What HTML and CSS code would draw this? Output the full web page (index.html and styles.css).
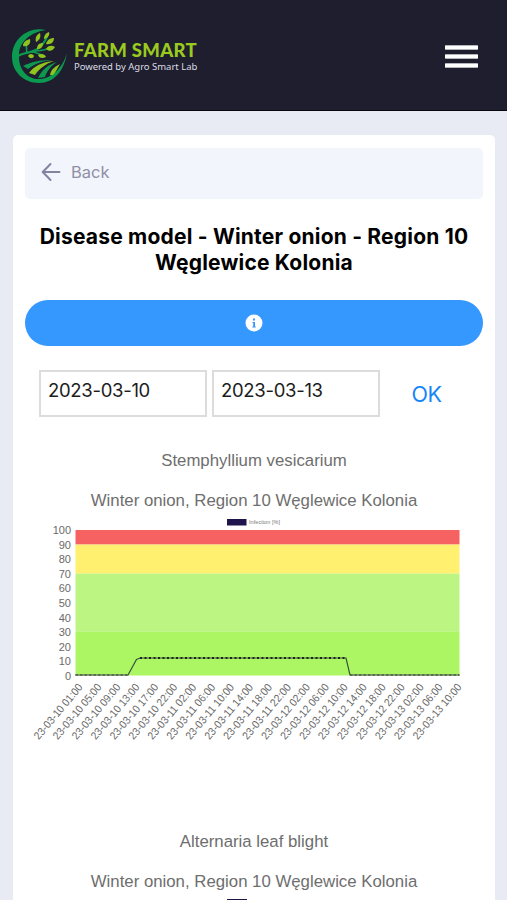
FILE: index.html
```html
<!DOCTYPE html>
<html lang="en">
<head>
  <meta charset="UTF-8">
  <meta name="viewport" content="width=device-width, initial-scale=1.0">
  <title>Farm Smart - Disease model</title>
  <link rel="stylesheet" href="styles.css">
</head>
<body>
  <header class="topbar">
    <div class="brand">
      <svg class="brand-logo" width="56" height="56" viewBox="0 0 56 56">
        <path d="M34 2C15-2 0 12 0 29c0 15 12 26 27 26 15 0 25-12 28-30-4 14-14 25-27 26C16 52 7 42 7 29 6 15 18 4 34 2z" fill="#0c9a50"/>
        <g fill="none" stroke="#0c9a50" stroke-linecap="round">
          <path d="M4 29c9-6 17-3 24-10 4-4 6-7 7-11" stroke-width="2.2"/>
          <path d="M15 25c-1-4 0-6-1-9M22 23c6 0 12-1 18-4M20 24c4 0 7 2 10 3" stroke-width="1.7"/>
        </g>
        <g fill="#8fc31f">
          <path d="M11 18c0-4 3-6 7-7 1 5-2 8-7 7z"/>
          <path d="M24 14c-1-4 0-7 4-9 1 4 0 7-4 9z"/>
          <path d="M32 11c0-4 2-6 5-7 1 3-1 6-5 7z"/>
          <path d="M34 16c1-4 4-6 8-6 0 4-3 7-8 6z"/>
          <path d="M34 21c2-4 6-4 9-2-2 4-6 5-9 2z"/>
          <path d="M25 21c0-4 2-6 6-6 0 4-2 6-6 6z"/>
          <path d="M16 28c2-3 5-2 6 0-1 3-4 3-6 0z"/>
          <path d="M26 27c3-2 7-1 8 2-4 2-7 1-8-2z"/>
        </g>
        <path d="M11 38c8-4 17-6 29-6-10 1-18 4-24 9z" fill="#0c9a50"/>
        <path d="M17 45c5-7 13-11 25-12-9 3-15 8-19 14z" fill="#8fc31f"/>
        <path d="M26 50c4-8 9-13 19-16-7 5-10 9-12 15z" fill="#0c9a50"/>
        <path d="M38 47c1-5 4-8 10-11-3 5-4 8-7 11z" fill="#8fc31f"/>
      </svg>
      <div class="brand-text">
        <div class="brand-name">FARM SMART</div>
        <div class="brand-sub">Powered by Agro Smart Lab</div>
      </div>
    </div>
    <div class="menu">
      <span></span>
      <span></span>
      <span></span>
    </div>
  </header>

  <main class="card">
    <a class="back">
      <svg width="20" height="20" viewBox="0 0 20 20" fill="none" stroke="#8483a0" stroke-width="2" stroke-linecap="round" stroke-linejoin="round">
        <path d="M18.5 10H2M9.5 2L1.7 10l7.8 8"/>
      </svg>
      <span>Back</span>
    </a>
    <h1>Disease model - Winter onion - Region 10 Węglewice Kolonia</h1>
    <button class="info">
      <svg width="18" height="18" viewBox="0 0 18 18">
        <circle cx="9" cy="9" r="8.5" fill="#fff"/>
        <path d="M8 4.5h2v2H8zM7.5 8H10v4.5h.8v1H7.3v-1h.9V9h-.7z" fill="#3598fe"/>
      </svg>
    </button>
    <div class="dates">
      <div class="date">2023-03-10</div>
      <div class="date">2023-03-13</div>
      <a class="ok">OK</a>
    </div>

    <section class="model">
      <h2>Stemphyllium vesicarium</h2>
      <h3>Winter onion, Region 10 Węglewice Kolonia</h3>
      <svg class="chart" id="chart" width="457" height="250" viewBox="25 511 457 250"></svg>
    </section>

    <section class="model">
      <h2>Alternaria leaf blight</h2>
      <h3>Winter onion, Region 10 Węglewice Kolonia</h3>
      <div class="legend-box"></div>
    </section>
  </main>

  <script src="chart.js"></script>
</body>
</html>
```
FILE: styles.css
```css
* {
  box-sizing: border-box;
}
body {
  margin: 0;
  height: 900px;
  overflow: hidden;
  background-color: #e8ebf4;
  font-family: Inter, "Liberation Sans", sans-serif;
}
.topbar {
  height: 111px;
  display: flex;
  justify-content: space-between;
  align-items: center;
  padding: 1px 29px 0 12px;
  background-color: #1f1e2e;
  border-bottom: 1px solid #08080f;
}
.brand {
  display: flex;
  align-items: center;
  gap: 6px;
}
.brand-text {
  padding-top: 1px;
}
.brand-name {
  font-family: Lato, sans-serif;
  font-weight: 900;
  font-size: 18.5px;
  line-height: 20px;
  letter-spacing: 0.3px;
  color: #9aca1e;
  white-space: nowrap;
}
.brand-sub {
  font-family: "Noto Sans", sans-serif;
  font-size: 9.5px;
  line-height: 13px;
  letter-spacing: -0.02px;
  color: #dcdce4;
  white-space: nowrap;
}
.menu {
  display: flex;
  flex-direction: column;
  gap: 4px;
  padding-top: 1px;
}
.menu span {
  width: 33px;
  height: 5px;
  border-radius: 1px;
  background-color: #fff;
  border: 1px solid #b4b4bb;
  border-width: 1px 0;
}
.card {
  margin: 24px 12px 0 13px;
  height: 800px;
  padding: 13px 12px 0;
  background-color: #fff;
  border-radius: 5px;
}
.back {
  height: 51px;
  display: flex;
  align-items: center;
  gap: 10px;
  padding: 0 16px 4px;
  border-radius: 5px;
  background-color: #f3f5fd;
  color: #8f8fa5;
  font-size: 16.5px;
}
h1 {
  margin: 25px 0 24px;
  font-size: 21px;
  line-height: 26px;
  font-weight: 700;
  letter-spacing: 0.2px;
  text-align: center;
  color: #000;
}
.info {
  width: 100%;
  height: 46px;
  display: flex;
  align-items: center;
  justify-content: center;
  border: none;
  border-radius: 23px;
  background-color: #3598fe;
}
.dates {
  display: flex;
  gap: 5px;
  padding: 24px 15px 0 14px;
}
.date {
  width: 168px;
  height: 47px;
  padding: 7px 7px;
  border: 2px solid #dcdcdc;
  font-size: 18.5px;
  line-height: 23px;
  letter-spacing: -0.3px;
  color: #1c1c1c;
}
.ok {
  flex: 1;
  text-align: center;
  font-size: 21.5px;
  line-height: 48px;
  letter-spacing: -0.4px;
  color: #1585f8;
}
.model {
  font-family: "Liberation Sans", Arial, sans-serif;
  color: #6e6e6e;
  text-align: center;
}
.model h2,
.model h3 {
  margin: 0;
  font-size: 16.8px;
  line-height: 20px;
  font-weight: normal;
}
.model h2 {
  padding-top: 33px;
}
.model h3 {
  padding-top: 20px;
}
.chart {
  display: block;
  margin-bottom: 38px;
}
.axis {
  font-family: "Liberation Sans", Arial, sans-serif;
  font-size: 11px;
  fill: #6a6a6a;
  text-anchor: end;
}
.legend {
  font-family: "Liberation Sans", Arial, sans-serif;
  font-size: 5.5px;
  fill: #777;
}
.legend-box {
  width: 20px;
  height: 7px;
  margin: 7px 0 0 202px;
  background-color: #20144c;
}
```
FILE: chart.js
```javascript
const svg = document.getElementById("chart");
const left = 75.5, right = 459.5, top0 = 530, bottom = 675.5;

const bands = [
  [90, 100, "#f66161"],
  [70, 90, "#fff06f"],
  [30, 70, "#bcf581"],
  [0, 30, "#adf663"]
];

const labels = [
  "23-03-10 01:00", "23-03-10 05:00", "23-03-10 09:00", "23-03-10 13:00", "23-03-10 17:00",
  "23-03-10 22:00", "23-03-11 02:00", "23-03-11 06:00", "23-03-11 10:00", "23-03-11 14:00",
  "23-03-11 18:00", "23-03-11 22:00", "23-03-12 02:00", "23-03-12 06:00", "23-03-12 10:00",
  "23-03-12 14:00", "23-03-12 18:00", "23-03-12 22:00", "23-03-13 02:00", "23-03-13 06:00",
  "23-03-13 10:00"
];

function y(value) {
  return bottom - (bottom - top0) * value / 100;
}

function add(tag, attrs, text) {
  const el = document.createElementNS("http://www.w3.org/2000/svg", tag);
  for (const key in attrs) el.setAttribute(key, attrs[key]);
  if (text) el.textContent = text;
  svg.appendChild(el);
}

// legend
add("rect", { x: 227, y: 519, width: 19.5, height: 6.5, fill: "#20144c" });
add("text", { x: 249, y: 524.3, class: "legend", textLength: 31 }, "Infection [%]");

bands.forEach(([from, to, fill]) => {
  add("rect", { x: left, y: y(to), width: right - left, height: y(from) - y(to), fill });
});

for (let v = 0; v <= 100; v += 10) {
  add("text", { x: 71, y: y(v) + 4.2, class: "axis" }, String(v));
}

labels.forEach((label, i) => {
  const x = 83.2 + i * 18.95;
  add("text", { x, y: 687.5, class: "axis", textLength: 69, lengthAdjust: "spacingAndGlyphs", transform: `rotate(-50 ${x} 687.5)` }, label);
});

// infection line with point dots on top
const line = "M75.5 675H128L136.5 659.5L140 658H346L350 675H459.5";
add("path", { d: line, fill: "none", stroke: "#35523a", "stroke-width": 1.2 });
add("path", { d: "M140 658H346", stroke: "#222", "stroke-width": 1.8, "stroke-dasharray": "2 2.5" });
add("path", { d: "M75.5 675H128M350 675H459.5", stroke: "#555", "stroke-width": 1.5, "stroke-dasharray": "2.5 2" });
```
